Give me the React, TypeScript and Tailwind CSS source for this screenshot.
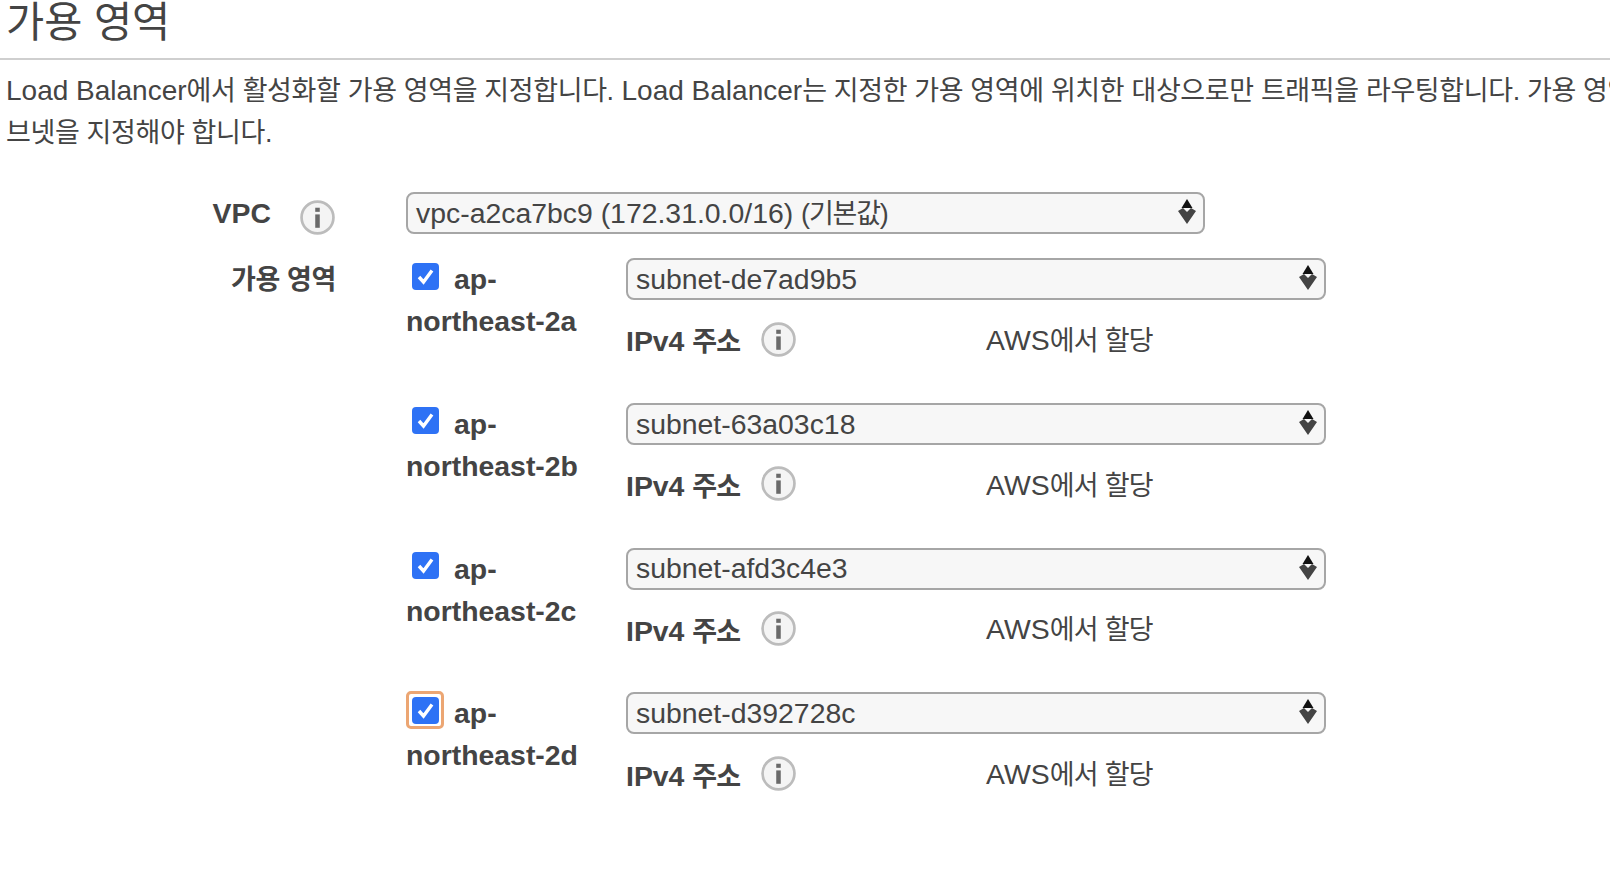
const font = "font-['Liberation_Sans','Noto_Sans_CJK_KR',sans-serif]"

// korean runs sit a bit tighter than the latin ones
function Ko({ children, className = 'tracking-[-0.37px]' }: { children: React.ReactNode; className?: string }) {
  return <span className={`text-[27px] ${className}`}>{children}</span>
}

function InfoIcon({ className = '' }: { className?: string }) {
  return (
    <svg className={className} width="35" height="35" viewBox="0 0 34 34">
      <circle cx="17" cy="17" r="15.5" fill="#f4f4f4" stroke="#bcbcbc" strokeWidth="2.6" />
      <rect x="14.8" y="14" width="4.4" height="13" fill="#6a6a6a" />
      <rect x="14.8" y="7.5" width="4.4" height="4" fill="#6a6a6a" />
    </svg>
  )
}

function SelectBox({ children, className = '' }: { children: React.ReactNode; className?: string }) {
  return (
    <div className={`flex items-center justify-between h-[42px] pl-[8px] pr-[6px] border-2 border-[#a6a6a6] rounded-[8px] bg-[#f7f7f7] text-[28.4px] leading-none text-[#444] ${className}`}>
      <span className="whitespace-nowrap">{children}</span>
      <svg width="20" height="28" viewBox="0 0 20 28" className="-mt-[2px]">
        <path d="M10 1 L15.5 10 L4.5 10 Z" fill="#111" />
        <path d="M1 13 L6 10 L10 14 L14 10 L19 13 L10 26 Z" fill="#444" />
      </svg>
    </div>
  )
}

function Zone({ name, subnet, focused }: { name: string; subnet: string; focused?: boolean }) {
  return (
    <div className="flex h-[144.8px]">
      <div className="w-[220px] shrink-0 text-[28.4px] leading-[42px] font-bold text-[#444]">
        <div className="flex items-center h-[42px]">
          <span className={`flex items-center justify-center w-[38px] h-[38px] mb-[6px] rounded-[5px] ${focused ? 'border-[3px] border-[#eca673]' : ''}`}>
            <span className="flex items-center justify-center w-[27px] h-[27px] rounded-[4px] bg-[#2e72f5]">
              <svg width="19" height="19" viewBox="0 0 19 19">
                <path d="M3 10 L7.5 15 L16 3.5" fill="none" stroke="#fff" strokeWidth="3.4" />
              </svg>
            </span>
          </span>
          <span className="ml-[10px]">ap-</span>
        </div>
        <div>{name}</div>
      </div>
      <div className="w-[700px] shrink-0">
        <SelectBox>{subnet}</SelectBox>
        <div className="flex items-center h-[40px] mt-[19px]">
          <span className="w-[135px] pt-[5px] text-[28.4px] font-bold text-[#444] whitespace-nowrap">IPv4 <Ko className="tracking-[-0.8px]">주소</Ko></span>
          <InfoIcon />
          <span className="ml-[190px] pt-[2px] text-[28.4px] text-[#444] whitespace-nowrap">AWS<Ko className="tracking-[-0.7px]">에서 할당</Ko></span>
        </div>
      </div>
    </div>
  )
}

export default function App() {
  const zones = [
    { name: 'northeast-2a', subnet: 'subnet-de7ad9b5' },
    { name: 'northeast-2b', subnet: 'subnet-63a03c18' },
    { name: 'northeast-2c', subnet: 'subnet-afd3c4e3' },
    { name: 'northeast-2d', subnet: 'subnet-d392728c', focused: true },
  ]

  return (
    <div className={`w-[1610px] h-[884px] overflow-hidden bg-white text-[#444] ${font}`}>
      <div className="pl-[6px] h-[60px] border-b-2 border-[#cfcfcf] text-[41.5px] leading-[45px]">가용 영역</div>
      <div className="pl-[6px] pt-[10px] text-[28px] leading-[42px] whitespace-nowrap">
        <div>Load Balancer<Ko>에서 활성화할 가용 영역을 지정합니다.</Ko> Load Balancer<Ko>는 지정한 가용 영역에 위치한 대상으로만 트래픽을 라우팅합니다. 가용 영역당 서</Ko></div>
        <div><Ko>브넷을 지정해야 합니다.</Ko></div>
      </div>
      <div className="flex mt-[38px]">
        <div className="w-[406px] shrink-0 flex flex-col items-end pr-[71px]">
          <div className="flex items-center h-[42px]">
            <span className="text-[28.4px] font-bold mr-[29px]">VPC</span>
            <InfoIcon className="mt-[8px]" />
          </div>
        </div>
        <SelectBox className="w-[799px]">vpc-a2ca7bc9 (172.31.0.0/16) <Ko className="tracking-[-1.2px]">(기본값)</Ko></SelectBox>
      </div>
      <div className="flex mt-[24px]">
        <div className="w-[406px] shrink-0 pr-[70px] text-right text-[28.4px] leading-[42px] font-bold"><Ko>가용 영역</Ko></div>
        <div>
          {zones.map(z => (
            <Zone key={z.name} {...z} />
          ))}
        </div>
      </div>
    </div>
  )
}
